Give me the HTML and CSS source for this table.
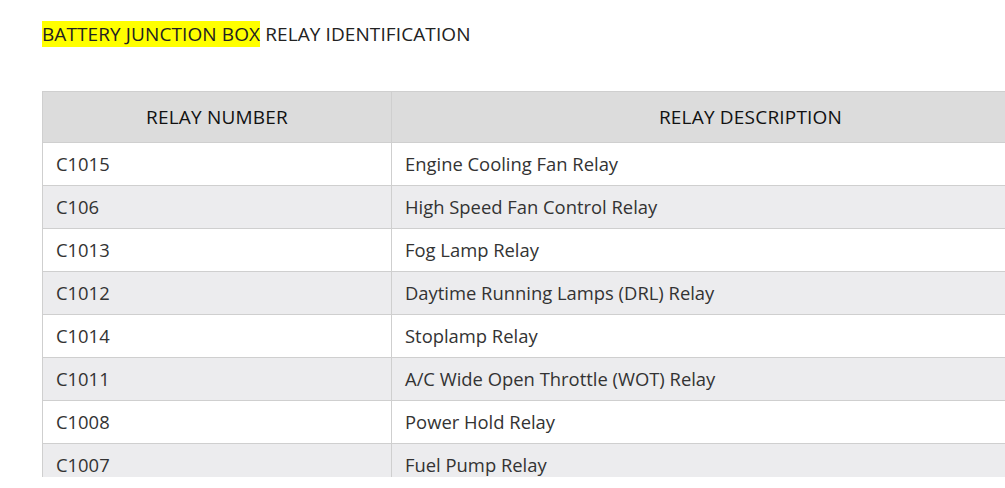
FILE: index.html
```html
<!DOCTYPE html>
<html>
<head>
<meta charset="utf-8">
<link rel="stylesheet" href="styles.css">
</head>
<body>
<div class="page">
  <h2 class="title"><span class="hl">BATTERY JUNCTION BOX</span> RELAY IDENTIFICATION</h2>
  <div class="clip">
    <table class="relays">
      <thead>
        <tr><th class="c1">RELAY NUMBER</th><th class="c2">RELAY DESCRIPTION</th></tr>
      </thead>
      <tbody>
        <tr><td>C1015</td><td>Engine Cooling Fan Relay</td></tr>
        <tr><td>C106</td><td>High Speed Fan Control Relay</td></tr>
        <tr><td>C1013</td><td>Fog Lamp Relay</td></tr>
        <tr><td>C1012</td><td>Daytime Running Lamps (DRL) Relay</td></tr>
        <tr><td>C1014</td><td>Stoplamp Relay</td></tr>
        <tr><td>C1011</td><td>A/C Wide Open Throttle (WOT) Relay</td></tr>
        <tr><td>C1008</td><td>Power Hold Relay</td></tr>
        <tr><td>C1007</td><td>Fuel Pump Relay</td></tr>
      </tbody>
    </table>
  </div>
</div>
</body>
</html>
```
FILE: styles.css
```css
html, body {
  margin: 0;
  padding: 0;
  overflow: hidden;
  background: #fff;
}
body {
  font-family: "Open Sans", "Noto Sans", sans-serif;
  color: #222;
}
.page {
  padding: 22px 0 0 42px;
  width: 1200px;
}
.title {
  margin: 0;
  font-size: 19px;
  font-weight: 400;
  line-height: 25px;
  color: #222;
  letter-spacing: 0.1px;
}
.hl {
  background: #ffff00;
}
.clip {
  margin-top: 44px;
  height: 386px;
  overflow: hidden;
}
.relays {
  border-collapse: collapse;
  width: 1068px;
  font-size: 18.4px;
}
.relays th, .relays td {
  border: 1px solid #cfcfcf;
  padding: 0 13px;
  text-align: left;
  font-weight: 400;
}
.relays th {
  background: #dcdcdc;
  height: 50px;
  text-align: center;
  color: #111;
  font-size: 19px;
  letter-spacing: 0.2px;
}
.relays td {
  height: 43px;
  padding-bottom: 2px;
  box-sizing: border-box;
  color: #333;
}
.relays .c1 { width: 322px; }
.relays tbody tr:nth-child(even) td {
  background: #ececee;
}
```
